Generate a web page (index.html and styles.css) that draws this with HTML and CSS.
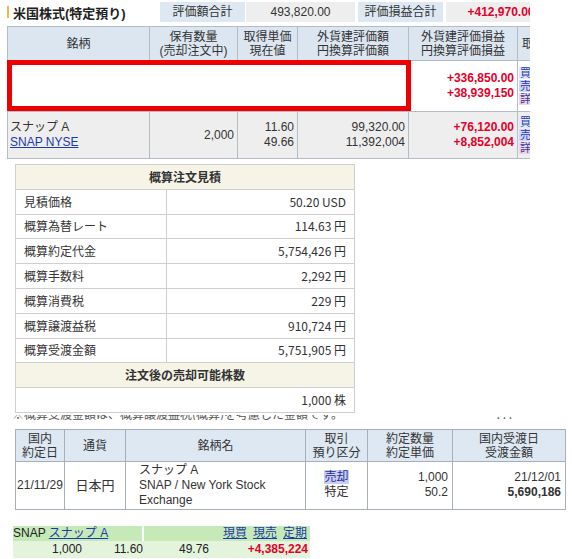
FILE: index.html
```html
<!DOCTYPE html>
<html lang="ja">
<head>
<meta charset="utf-8">
<title>米国株式</title>
<link rel="stylesheet" href="styles.css">
</head>
<body>
<div class="page">
  <section class="us">
    <div class="summary">
      <div class="title">米国株式(特定預り)</div>
      <div class="lbl">評価額合計</div>
      <div class="val">493,820.00</div>
      <div class="lbl lbl2">評価損益合計</div>
      <div class="val val2 plus">+412,970.00</div>
    </div>
    <div class="holdwrap">
      <table class="hold">
        <colgroup><col class="c1"><col class="c2"><col class="c3"><col class="c4"><col class="c5"><col class="c6"></colgroup>
        <thead>
          <tr><th>銘柄</th><th>保有数量<br>(売却注文中)</th><th>取得単価<br>現在値</th><th>外貨建評価額<br>円換算評価額</th><th>外貨建評価損益<br>円換算評価損益</th><th class="cut">取引</th></tr>
        </thead>
        <tbody>
          <tr class="r1">
            <td></td><td></td><td></td><td></td>
            <td class="num plus">+336,850.00<br>+38,939,150</td>
            <td class="cut"><div class="btns"><span class="b1">買付</span><span class="b2">売却</span><span class="b3">詳細</span></div></td>
          </tr>
          <tr class="r2">
            <td class="name">スナップ A<br><a href="#">SNAP NYSE</a></td>
            <td class="num">2,000</td>
            <td class="num">11.60<br>49.66</td>
            <td class="num">99,320.00<br>11,392,004</td>
            <td class="num plus">+76,120.00<br>+8,852,004</td>
            <td class="cut"><div class="btns"><span class="b1">買付</span><span class="b2">売却</span><span class="b3">詳細</span></div></td>
          </tr>
        </tbody>
      </table>
      <div class="redbox"></div>
    </div>
  </section>

  <table class="est">
    <colgroup><col class="e1"><col class="e2"></colgroup>
    <tr><th colspan="2">概算注文見積</th></tr>
    <tr><td>見積価格</td><td class="v">50.20 USD</td></tr>
    <tr><td>概算為替レート</td><td class="v">114.63 円</td></tr>
    <tr><td>概算約定代金</td><td class="v">5,754,426 円</td></tr>
    <tr><td>概算手数料</td><td class="v">2,292 円</td></tr>
    <tr><td>概算消費税</td><td class="v">229 円</td></tr>
    <tr><td>概算譲渡益税</td><td class="v">910,724 円</td></tr>
    <tr><td>概算受渡金額</td><td class="v">5,751,905 円</td></tr>
    <tr><th colspan="2">注文後の売却可能株数</th></tr>
    <tr><td colspan="2" class="v">1,000 株</td></tr>
  </table>

  <div class="note"><span class="notetext">※概算受渡金額は、概算譲渡益税(概算)を考慮した金額です。</span><span class="dots">. . .</span></div>

  <table class="exec">
    <colgroup><col class="x1"><col class="x2"><col class="x3"><col class="x4"><col class="x5"><col class="x6"></colgroup>
    <thead>
      <tr><th>国内<br>約定日</th><th>通貨</th><th>銘柄名</th><th>取引<br>預り区分</th><th>約定数量<br>約定単価</th><th>国内受渡日<br>受渡金額</th></tr>
    </thead>
    <tbody>
      <tr>
        <td class="ctr">21/11/29</td>
        <td class="ctr cur">日本円</td>
        <td class="sym">スナップ A<br>SNAP / New York Stock Exchange</td>
        <td class="ctr"><a href="#" class="sell">売却</a><br>特定</td>
        <td class="num">1,000<br>50.2</td>
        <td class="num">21/12/01<br><b>5,690,186</b></td>
      </tr>
    </tbody>
  </table>

  <table class="mini">
    <colgroup><col class="m1"><col class="m2"><col class="m3"><col class="m4"></colgroup>
    <tr class="g1">
      <td colspan="2" class="mname">SNAP <a href="#">スナップ A</a></td>
      <td colspan="2" class="links"><a href="#">現買</a><a href="#">現売</a><a href="#">定期</a></td>
    </tr>
    <tr class="g2">
      <td>1,000</td><td>11.60</td><td>49.76</td><td class="plus">+4,385,224</td>
    </tr>
  </table>
</div>
</body>
</html>
```

FILE: styles.css
```css
html, body {
  margin: 0;
  padding: 0;
  background: #ffffff;
}
body {
  font-family: "Liberation Sans", Arial, "Noto Sans CJK JP", sans-serif;
  font-size: 12px;
  color: #222222;
}
a {
  color: #1c3aa8;
  text-decoration: underline;
}
.plus {
  color: #e3002b;
  font-weight: bold;
}

/* ===== US stock block ===== */
.us {
  margin-left: 7px;
  width: 523px;
  overflow: hidden;
  padding-top: 2px;
}
.summary {
  display: flex;
  height: 20px;
  width: 620px;
}
.title {
  width: 153px;
  display: flex;
  align-items: center;
  font-weight: bold;
  font-size: 13px;
  color: #222;
}
.title::before {
  content: "";
  width: 2px;
  height: 12px;
  background: #f2b84b;
  margin-right: 4px;
}
.lbl {
  width: 85px;
  background: #dde8f3;
  text-align: center;
  line-height: 20px;
  font-size: 12px;
  color: #333;
}
.lbl2 {
  margin-left: 3px;
}
.val {
  width: 109px;
  margin-left: 1px;
  background: #eeeeee;
  text-align: center;
  line-height: 20px;
  font-size: 12px;
  color: #333;
}
.val.val2 {
  margin-left: 3px;
  width: 110px;
  color: #e3002b;
}

.holdwrap {
  position: relative;
  margin-top: 4px;
  width: 523px;
  overflow: hidden;
}
table.hold {
  border-collapse: collapse;
  table-layout: fixed;
  width: 580px;
}
.hold .c1 { width: 142px; }
.hold .c2 { width: 88px; }
.hold .c3 { width: 60px; }
.hold .c4 { width: 111px; }
.hold .c5 { width: 109px; }
.hold .c6 { width: 70px; }
.hold th {
  background: #dce6f1;
  border: 1px solid #b3bcc7;
  font-weight: normal;
  font-size: 12px;
  line-height: 14px;
  height: 33px;
  padding: 0;
  color: #333;
}
.hold td {
  border: 1px solid #b3bcc7;
  padding: 0 3px;
  line-height: 15px;
  font-size: 12px;
  color: #333;
}
.hold .r1 td {
  height: 50px;
  background: #ffffff;
}
.hold .r2 td {
  height: 46px;
  background: #eeeeee;
}
.hold td.num {
  text-align: right;
}
.hold td.num.plus {
  color: #e3002b;
}
.hold td.name {
  padding-left: 2px;
}
.hold .cut {
  text-align: left;
  padding-left: 1px;
  vertical-align: middle;
}
.hold th.cut {
  padding-left: 4px;
}
.btns {
  display: flex;
  flex-direction: column;
  align-items: flex-start;
  gap: 1px;
}
.btns span {
  font-size: 11px;
  line-height: 12px;
  color: #2a3ea8;
  padding: 0 1px;
}
.btns .b1 { background: #e4e8ff; }
.btns .b2 { background: #cfd6ff; }
.btns .b3 { background: #f6d3e4; }
.redbox {
  position: absolute;
  left: 0;
  top: 34px;
  width: 404px;
  height: 51px;
  border: 5px solid #ee0000;
  background: #ffffff;
  box-sizing: border-box;
}

/* ===== estimate ===== */
table.est {
  margin: 5px 0 0 15px;
  border-collapse: collapse;
  table-layout: fixed;
  width: 339px;
  font-family: "Noto Sans CJK JP", "Liberation Sans", sans-serif;
  font-size: 12px;
  color: #333;
}
.est .e1 { width: 151px; }
.est .e2 { width: 188px; }
.est th, .est td {
  border: 1px solid #cfcfcf;
  height: 23.8px;
  padding: 0 8px;
  line-height: 14px;
}
.est th {
  background: #f5f4e6;
  font-weight: bold;
  text-align: center;
}
.est td.v {
  text-align: right;
}

.note {
  height: 5px;
  overflow: hidden;
  margin: 2px 0 0 12px;
  width: 500px;
  display: flex;
  justify-content: space-between;
  font-family: "Noto Sans CJK JP", sans-serif;
  font-size: 12px;
  color: #555;
}
.notetext, .dots {
  display: block;
  line-height: 12px;
  margin-top: -7px;
}

/* ===== execution ===== */
table.exec {
  margin: 9px 0 0 15px;
  border-collapse: collapse;
  table-layout: fixed;
  width: 550px;
  font-size: 12px;
  color: #333;
}
.exec .x1 { width: 49px; }
.exec .x2 { width: 61px; }
.exec .x3 { width: 180px; }
.exec .x4 { width: 62px; }
.exec .x5 { width: 85px; }
.exec .x6 { width: 113px; }
.exec th {
  background: #dde8f3;
  border: 1px solid #a7afba;
  font-weight: normal;
  line-height: 14px;
  height: 31px;
  padding: 0;
  font-family: "Noto Sans CJK JP", sans-serif;
  font-size: 12px;
  color: #333;
}
.exec td {
  border: 1px solid #a7afba;
  height: 47px;
  line-height: 15px;
  padding: 0 4px;
}
.exec td.ctr {
  text-align: center;
  padding: 0;
}
.exec td.cur {
  font-size: 13px;
}
.exec td.sym {
  padding: 0 10px 0 13px;
}
.exec td.num {
  text-align: right;
}
.exec a.sell {
  background: #cbcdf3;
  text-decoration: none;
  color: #1c2f98;
}

/* ===== mini ===== */
table.mini {
  margin: 16px 0 0 13px;
  border-collapse: collapse;
  table-layout: fixed;
  width: 297px;
  font-size: 12px;
  color: #222;
}
.mini .m1 { width: 69px; }
.mini .m2 { width: 61px; }
.mini .m3 { width: 66px; }
.mini .m4 { width: 101px; }
.mini td {
  padding: 0;
}
.mini .g1 td {
  background: #c6e9b8;
  height: 15px;
  line-height: 15px;
}
.mini .g1 td.mname {
  border-right: 2px solid #ffffff;
}
.mini .g1 td.links {
  text-align: right;
  padding-right: 3px;
}
.mini .links a {
  margin-left: 6px;
}
.mini .g2 td {
  background: #e3f3dc;
  height: 17px;
  line-height: 17px;
  text-align: right;
}
.mini .g2 td.plus {
  padding-right: 2px;
}
```
